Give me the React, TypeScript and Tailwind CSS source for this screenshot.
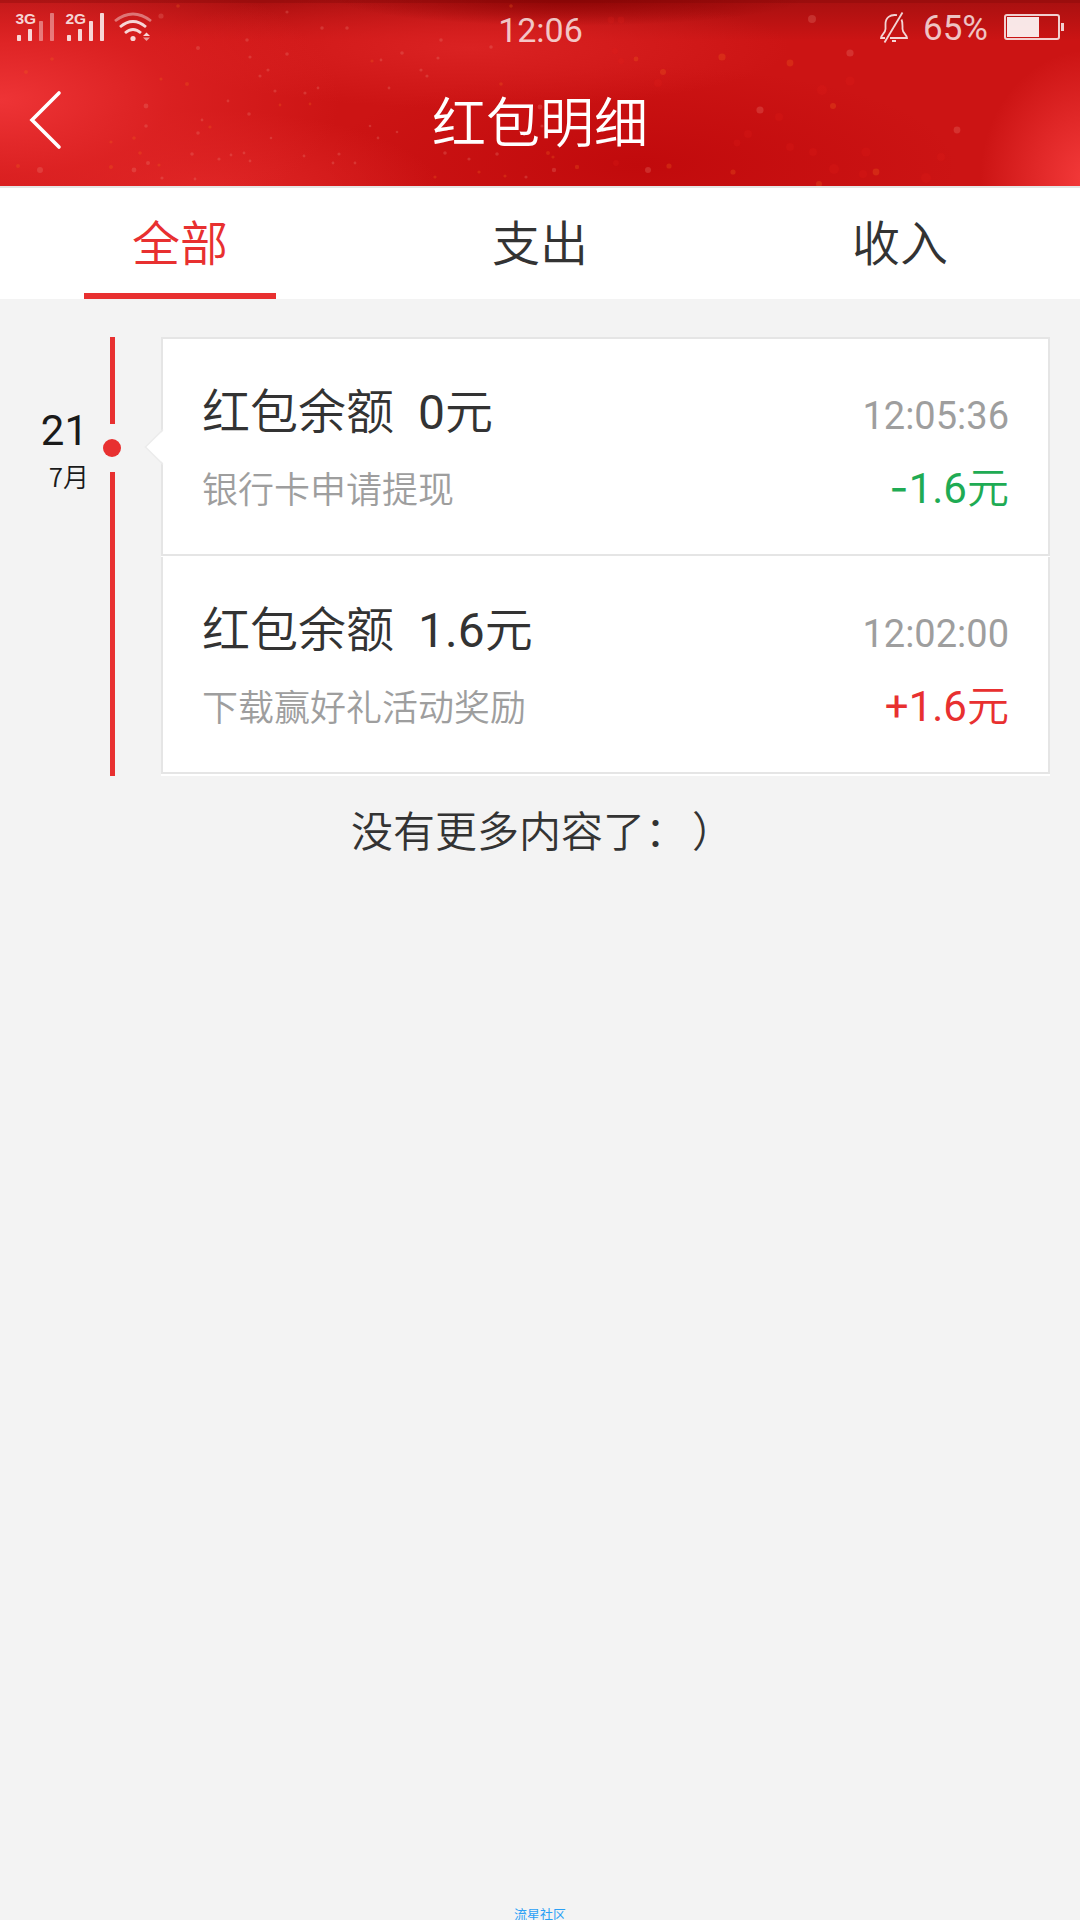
import { useState } from "react";
import clsx from "clsx";

type RecordItem = {
  balance: string;
  time: string;
  desc: string;
  amount: string;
  income: boolean;
};

const tabs = ["全部", "支出", "收入"];

const records: RecordItem[] = [
  { balance: "0", time: "12:05:36", desc: "银行卡申请提现", amount: "1.6", income: false },
  { balance: "1.6", time: "12:02:00", desc: "下载赢好礼活动奖励", amount: "1.6", income: true },
];

// x, y, radius of the bright flecks in the header
const flecks = [
  [161, 16, 2.6], [198, 48, 2], [247, 40, 1.8], [146, 106, 2.4], [146, 126, 1.8], [40, 170, 3],
  [134, 170, 2.4], [148, 163, 2], [192, 154, 1.8], [198, 133, 1.8], [250, 57, 1.6], [268, 70, 1.6],
  [287, 54, 1.8], [322, 28, 1.8], [287, 12, 1.6], [347, 28, 1.8], [402, 53, 1.8], [441, 40, 1.8],
  [438, 58, 1.6], [421, 70, 1.6], [381, 60, 1.4], [275, 91, 1.6], [305, 93, 1.6], [260, 76, 1.6],
  [249, 114, 1.8], [228, 101, 1.4], [318, 88, 1.4], [389, 88, 1.4], [219, 159, 1.6], [162, 178, 1.6],
  [195, 179, 1.4], [250, 161, 1.4], [231, 155, 1.4], [244, 153, 1.4], [304, 156, 1.4], [339, 154, 1.6],
  [378, 138, 1.4], [445, 153, 1.8], [469, 159, 1.6], [497, 154, 1.8], [491, 47, 1.8], [427, 76, 1.6],
  [333, 163, 1.4], [355, 163, 1.4], [370, 126, 1.3], [397, 132, 1.3], [202, 120, 1.4], [271, 138, 1.3],
  [526, 177, 1.6], [542, 126, 1.6], [554, 170, 2.2], [648, 170, 3], [812, 19, 4], [850, 53, 3.6],
  [760, 110, 3.6], [957, 130, 3.4], [540, 107, 2.4],
];

const embers = [
  [178, 6, 1.8], [26, 72, 2], [52, 59, 1.8], [187, 84, 2], [161, 79, 1.6], [134, 138, 1.8],
  [140, 153, 1.8], [111, 142, 1.6], [111, 167, 2], [18, 166, 2], [159, 165, 1.6], [501, 84, 1.8],
  [372, 61, 1.6], [511, 6, 1.8], [210, 127, 1.6], [310, 104, 1.4], [280, 105, 1.4], [636, 59, 2.4],
  [663, 72, 3], [722, 57, 3.6], [790, 63, 3.4], [833, 106, 3], [548, 153, 2], [577, 167, 2.2],
  [669, 166, 2.6], [819, 184, 3], [733, 172, 2.6], [479, 172, 1.6], [505, 176, 1.6], [435, 177, 1.6],
  [876, 172, 3.4], [553, 157, 1.6],
];

const bubbles = [
  [611, 20, 3.4], [621, 20, 3.4], [615, 51, 3], [621, 61, 3], [658, 83, 4], [822, 90, 5],
  [850, 81, 4.6], [779, 117, 4], [748, 134, 4], [790, 147, 4], [813, 152, 4], [737, 143, 3.4],
  [866, 152, 4.6], [834, 169, 5], [863, 174, 4], [926, 178, 5], [616, 163, 3], [941, 157, 4],
];

const HeaderBackdrop = () => (
  <svg className="absolute inset-0 h-full w-full" viewBox="0 0 1080 186">
    {bubbles.map(([x, y, r], i) => (
      <circle key={i} cx={x} cy={y} r={r} fill="#e8201c" fillOpacity="0.18" />
    ))}
    {embers.map(([x, y, r], i) => (
      <circle key={i} cx={x} cy={y} r={r} fill="#f0641e" fillOpacity="0.28" />
    ))}
    {flecks.map(([x, y, r], i) => (
      <circle key={i} cx={x} cy={y} r={r} fill="#ee8a80" fillOpacity="0.26" />
    ))}
    <rect width="1080" height="3" fill="#7c0808" fillOpacity="0.3" />
  </svg>
);

const Signal = ({ label, level }: { label: string; level: number }) => (
  <svg width="38" height="30" viewBox="0 0 38 30" fill="#fff" className="overflow-visible">
    <text x="-1.5" y="12" fontFamily="Liberation Sans, sans-serif" fontSize="15.5" fontWeight="700" fillOpacity="0.82">
      {label}
    </text>
    {[6, 12, 20, 28].map((h, i) => (
      <rect key={h} x={i * 11} y={29 - h} width="4" height={h} rx="0.8" fillOpacity={i < level ? 0.82 : 0.4} />
    ))}
  </svg>
);

const Wifi = () => (
  <svg width="38" height="30" viewBox="0 0 38 30" fill="none" stroke="#fff" strokeWidth="2.8">
    <path d="M1 9 Q19 -5 37 9" strokeOpacity="0.4" />
    <path d="M6 15 Q19 4 32 15" strokeOpacity="0.82" />
    <path d="M11 21 Q19 14 27 21" strokeOpacity="0.82" />
    <circle cx="19" cy="26.5" r="2.6" fill="#fff" fillOpacity="0.82" stroke="none" />
    <path d="M29 24 L32.5 20.5 L36 24Z" fill="#fff" fillOpacity="0.82" stroke="none" />
    <path d="M29 25.5 L32.5 29 L36 25.5Z" fill="#fff" fillOpacity="0.55" stroke="none" />
  </svg>
);

const BellOff = () => (
  <svg width="28" height="32" viewBox="0 0 28 32" fill="none" stroke="#fff" strokeOpacity="0.82" strokeWidth="1.8">
    <path d="M17 3.2 C10 2 5.5 6 5.5 12 V17 C5.5 21 1 23 1 26 H5" />
    <path d="M21.5 7.5 C22.5 9.5 22.5 11 22.5 14 V17 C22.5 21 27 23 27 26 H10" />
    <path d="M22.5 0.5 L4.5 30.5" />
    <path d="M12 29 H16" strokeWidth="2" />
  </svg>
);

const StatusBar = () => (
  <div className="relative flex h-[60px] items-start justify-between pl-[17px] pr-4 pt-3">
    <div className="flex w-[400px]">
      <Signal label="3G" level={2} />
      <div className="w-3" />
      <Signal label="2G" level={4} />
      <div className="w-[9px]" />
      <Wifi />
    </div>
    <span className="font-['Roboto'] text-[34px] font-normal leading-[36px] text-white/75">12:06</span>
    <div className="flex w-[400px] items-start justify-end">
      <BellOff />
      <span className="ml-[15px] mr-4 font-['Roboto'] text-[35px] font-normal leading-[33px] text-white/75">65%</span>
      <div className="mt-[2px] flex items-center gap-px">
        <div className="h-[26px] w-14 rounded-[3px] border-2 border-white/80 p-px">
          <div className="h-full w-8 bg-white/90" />
        </div>
        <div className="h-2 w-[3px] bg-white/80" />
      </div>
    </div>
  </div>
);

const RecordCard = ({ record, first }: { record: RecordItem; first: boolean }) => (
  <div
    className={clsx(
      "relative flex justify-between border-2 border-[#e5e5e5] px-[39px]",
      first ? "h-[219px] pt-[41px]" : "mt-px h-[217px] border-t-0 pt-[41px]",
    )}
  >
    {first && (
      <svg className="absolute -left-[19px] top-[89px]" width="21" height="38" viewBox="0 0 21 38">
        <path d="M21 1 L2 19 L21 37Z" fill="#fff" />
        <path d="M19 1.5 L1.5 19 L19 36.5" fill="none" stroke="#ececec" strokeWidth="1.5" />
      </svg>
    )}
    <div className="flex flex-col">
      <p className="flex h-[60px] items-baseline text-[48px] leading-[56px] text-[#333]">
        红包余额
        <span className="ml-6 font-['Roboto','Noto_Sans_CJK_SC'] font-normal">{record.balance}</span>
        <span>元</span>
      </p>
      <p className="mt-[27px] text-[36px] leading-[40px] text-[#9e9e9e]">{record.desc}</p>
    </div>
    <div className="flex flex-col items-end">
      <p className="mt-4 font-['Roboto'] text-[38px] font-normal leading-[40px] text-[#9e9e9e]">{record.time}</p>
      <p className={clsx("mt-[25px] flex items-baseline text-[42px] leading-[48px]", record.income ? "text-[#e83030]" : "text-[#1fab54]")}>
        <span className={record.income ? "font-['Roboto'] font-normal" : "font-['Inter'] font-normal"}>
          {record.income ? "+" : "-"}
        </span>
        <span className="font-['Roboto'] font-normal">{record.amount}</span>
        <span>元</span>
      </p>
    </div>
  </div>
);

const App = () => {
  const [active, setActive] = useState<number>(0);

  return (
    <div className="flex h-[1920px] w-[1080px] flex-col overflow-hidden bg-[#f3f3f3] font-['Noto_Sans_CJK_SC',sans-serif] font-[350]">
      <header className="relative h-[186px] bg-[#cc1414] bg-[radial-gradient(ellipse_340px_150px_at_0px_100px,#ee3436_0%,#e02526b0_50%,transparent_100%),radial-gradient(ellipse_240px_30px_at_570px_-4px,#8a0404_0%,transparent_100%),radial-gradient(ellipse_110px_130px_at_1090px_180px,#f53b3b_0%,transparent_100%),radial-gradient(ellipse_320px_60px_at_470px_48px,#da2222_0%,transparent_100%),radial-gradient(ellipse_240px_80px_at_200px_190px,#e02626_0%,transparent_100%),radial-gradient(ellipse_320px_100px_at_640px_165px,#c10a0c_0%,transparent_100%),linear-gradient(180deg,#a81010_0%,transparent_22%)]">
        <HeaderBackdrop />
        <StatusBar />
        <div className="relative flex h-[119px] items-center px-[29px]">
          <button type="button" className="w-[100px] cursor-pointer">
            <svg width="33" height="60" viewBox="0 0 33 60" fill="none" stroke="#fff" strokeWidth="3.6" strokeLinecap="round">
              <path d="M30 3 L3 30 L30 57" />
            </svg>
          </button>
          <h1 className="flex-1 text-center text-[54px] leading-[60px] text-white">红包明细</h1>
          <div className="w-[100px]" />
        </div>
      </header>

      <nav className="flex h-[113px] border-t-2 border-[#e5e5e5] bg-white">
        {tabs.map((tab, i) => (
          <button
            type="button"
            key={tab}
            className={clsx(
              "flex flex-1 cursor-pointer flex-col items-center justify-between pt-[21px] text-[48px] leading-[62px]",
              active === i ? "text-[#e83030]" : "text-[#333]",
            )}
            onClick={() => setActive(i)}
          >
            {tab}
            {active === i && <span className="h-[6px] w-48 bg-[#e83030]" />}
          </button>
        ))}
      </nav>

      <section className="mt-[38px] flex h-[439px] pr-[30px]">
        <div className="flex w-[103px] flex-col items-end pt-[72px] text-[#1a1a1a]">
          <span className="mr-[15px] font-['Roboto'] text-[42px] font-normal leading-[44px]">21</span>
          <span className="mr-[14px] mt-[7px] text-[26px] leading-[32px]">7月</span>
        </div>
        <div className="flex w-[18px] flex-col items-center">
          <div className="h-[87px] w-[5px] bg-[#e83030]" />
          <div className="my-[15px] size-[18px] shrink-0 rounded-full bg-[#e83030]" />
          <div className="w-[5px] flex-1 bg-[#e83030]" />
        </div>
        <div className="ml-10 flex-1 bg-white">
          {records.map((record, i) => (
            <RecordCard key={record.time} record={record} first={i === 0} />
          ))}
        </div>
      </section>

      <p className="mt-7 text-center text-[42px] leading-[50px] text-[#333] [text-spacing-trim:space-all]">
        没有更多内容了：<span className="relative left-[5px]">）</span>
      </p>

      <footer className="mt-auto text-center text-[13px] font-normal leading-[13px] text-[#2ba0f5]">流星社区</footer>
    </div>
  );
};

export default App;
